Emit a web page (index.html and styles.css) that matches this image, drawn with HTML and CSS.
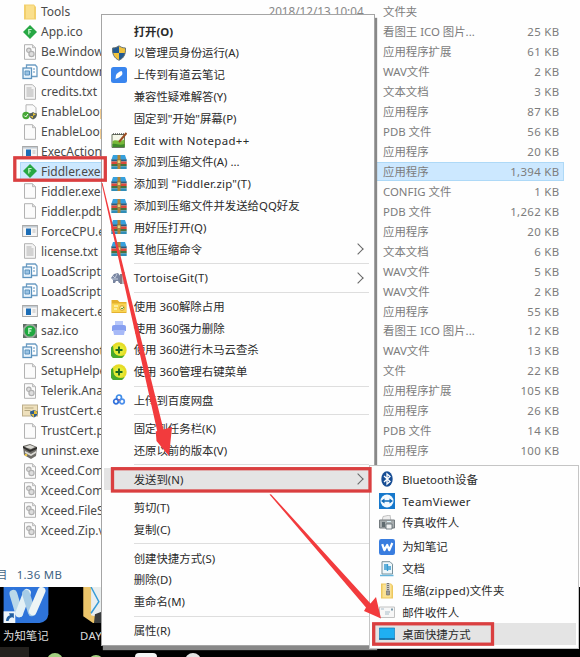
FILE: index.html
```html
<!DOCTYPE html>
<html lang="zh-CN">
<head>
<meta charset="utf-8">
<title>Fiddler</title>
<link rel="stylesheet" href="styles.css">
</head>
<body>
<svg class="defs" width="0" height="0" aria-hidden="true">
  <symbol id="folder" viewBox="0 0 16 16"><path d="M2 .5h10l2 2.500v12.500H2z" fill="#f2cf6c"/><path d="M4 1.500h8v13H4z" fill="#fadf8c"/></symbol>
  <symbol id="fid" viewBox="0 0 16 16"><path d="M8 1l7 7-7 7-7-7z" fill="#27a744"/><path d="M6.800 10.500V5.500h2.800M6.800 8H9" fill="none" stroke="#c5f5ca" stroke-width="1.200"/></symbol>
  <symbol id="page" viewBox="0 0 16 16"><path d="M2.500.7h8l3 3v11.600h-11z" fill="#fbfbfb" stroke="#b2b2b2"/><path d="M10.500.7v3h3" fill="#ddd" stroke="#b2b2b2" stroke-width=".8"/></symbol>
  <symbol id="dll" viewBox="0 0 16 16"><use href="#page"/><circle cx="6.800" cy="6.300" r="2.200" fill="#ddd" stroke="#b0b0b0" stroke-width="1.200"/><circle cx="9.500" cy="10" r="2.600" fill="#ddd" stroke="#b0b0b0" stroke-width="1.200"/></symbol>
  <symbol id="txt" viewBox="0 0 16 16"><path d="M2.500.7h8l3 3v11.600h-11z" fill="#f4f4f4" stroke="#b2b2b2"/><path d="M4.500 4h5M4.500 6h7M4.500 8h7M4.500 10h7M4.500 12h7" stroke="#a8a8a8" stroke-width=".9"/></symbol>
  <symbol id="wav" viewBox="0 0 16 16"><path d="M4.500 1h8.800l1.700 2v9.500H4.500z" fill="#fff" stroke="#6d9dc3" stroke-width="1.300"/><rect x="1" y="4" width="8.500" height="10.500" fill="#e7f3fc" stroke="#5d93be" stroke-width="1.300"/><path d="M3 7h4.500v4H3zM11 5h2M11 8h2" fill="#9bc4e5" stroke="#5d93be"/></symbol>
  <symbol id="exe" viewBox="0 0 16 16"><rect x=".6" y="2.500" width="14.800" height="11" fill="#f6f6f6" stroke="#a8a8a8"/><path d="M1 3h14v1.500H1z" fill="#c2cbd2"/><rect x="4" y="5.500" width="5" height="6.500" fill="#1c6db6"/><path d="M10.500 7h3M10.500 9h3" stroke="#bbb"/></symbol>
  <symbol id="loop" viewBox="0 0 16 16"><path d="M4 .8h7l3 3v6H4z" fill="#fafafa" stroke="#b4b4b4"/><circle cx="4" cy="11.500" r="3.700" fill="#48a838"/><path d="M2.200 11.500l1.500 1.500 2.300-3" fill="none" stroke="#fff"/><path d="M7 9.500c2 0 3-1 4-1.500 1 .5 2 1.500 4 1.500 0 3-1 5-4 6-3-1-4-3-4-6z" fill="#55605a"/><path d="M8 12h3v2.500zM11 9l3 1.300-3 1.700z" fill="#e5c33d"/></symbol>
  <symbol id="saz" viewBox="0 0 16 16"><path d="M1 1h14v14H1z" fill="#9da79f"/><path d="M1 1h4L1 5zM11 1h4v4zM1 11v4h4zM15 11v4h-4z" fill="#5f6d65"/><circle cx="8" cy="8" r="5.500" fill="#1fa83f"/><path d="M6.800 11V5.500h3M6.800 8h2.500" fill="none" stroke="#c7f2cc" stroke-width="1.300"/></symbol>
  <symbol id="cert" viewBox="0 0 16 16"><rect x=".5" y="2" width="15" height="11" fill="#eee0bc" stroke="#bcae8b"/><path d="M2.500 5h9M2.500 7.500h6" stroke="#b5a77f"/><path d="M8 8.500l4-1.500 3.700 1.500c0 3-1 5-3.700 6-3-1-4-3-4-6z" fill="#2d5c8e"/><path d="M12 7.500v3.500h3V8.500zM9 11h3v3.500z" fill="#e4bd38"/></symbol>
  <symbol id="uninst" viewBox="0 0 16 16"><path d="M1 3l7-2 7 3-1 9-5 3-7-4z" fill="#6e6c67"/><path d="M2 4l6-2 5 2-4 2zM3 8l6 3 5-3v2l-5 3-6-3z" fill="#dad9d3"/><path d="M1 3l7 4 7-3v2L8 9 1 5z" fill="#31302e"/><circle cx="4" cy="12" r="1.300" fill="#e8c34a"/></symbol>
  <symbol id="shield" viewBox="0 0 16 16"><path d="M1.500 3C5 3 7 1.500 8 .8 9 1.500 11 3 14.500 3c.3 6-1.500 10-6.500 12.300C3 13 1.200 9 1.500 3z" fill="#f1c33c"/><path d="M8 .8V8H1.800C1.400 6 1.500 4 1.500 3 5 3 7 1.500 8 .8zM8 8h6.200c-.7 3.500-2.700 6-6.200 7.300z" fill="#245a90"/><path d="M1.500 3C5 3 7 1.500 8 .8 9 1.500 11 3 14.500 3c.3 6-1.500 10-6.500 12.300C3 13 1.200 9 1.500 3z" fill="none" stroke="#66747b"/></symbol>
  <symbol id="youdao" viewBox="0 0 16 16"><rect width="16" height="16" rx="2.500" fill="#3985ee"/><path d="M4.500 12l.5-4c1.500-2 3-3.500 5.500-4 1.200 1 1 3 .5 4L8 10.500z" fill="#fff"/></symbol>
  <symbol id="npp" viewBox="0 0 16 16"><path d="M1 2.500h12.500v13H1z" fill="#f5f7e9" stroke="#6a7560"/><path d="M1.500 9.500c3-3 6 1 12-2V15h-12z" fill="#78b839"/><path d="M1.500 12c4-1 6 2 12 0v3h-12z" fill="#3e8a2b"/><path d="M2 2h12" stroke="#555" stroke-width="1.500" stroke-dasharray="1 1"/><path d="M15.500 1L8 10" stroke="#9b4c21" stroke-width="2"/></symbol>
  <symbol id="zip" viewBox="0 0 16 16"><path d="M2 1h12l1.500 4.500H.5z" fill="#36a0dd"/><path d="M.3 5.300h15.400v2.200H.3z" fill="#255d82"/><path d="M.3 7.500h15.400V10H.3z" fill="#dc493a"/><path d="M.3 10h15.400v2.300H.3z" fill="#49723d"/><path d="M.3 12.300h15.400V15H.3z" fill="#2f8db7"/><path d="M6.500 1h3v14h-3z" fill="#b38436"/><rect x="6.200" y="6" width="3.600" height="3.500" fill="#ead17b" stroke="#8e713c" stroke-width=".7"/></symbol>
  <symbol id="tortoise" viewBox="0 0 16 16"><path d="M0 8l3-4 4-1 3 4v6H8l-1-2H5l-1 2H2v-3z" fill="#7885a0"/><path d="M2 6l2 2 2-4M1 9h6" stroke="#c2cbdc" fill="none"/><path d="M9 4h5v10H9z" fill="#817c85"/><path d="M11 2h3v12h-3z" fill="#b9b5bb"/></symbol>
  <symbol id="unlock" viewBox="0 0 16 16"><path d="M.5 2h6l2 2h7v11H.5z" fill="#e5b12e"/><path d="M1 5.500h14V14H1z" fill="#f8d552"/><path d="M3 8h4M3 11h3" stroke="#fff3b5" stroke-width="1.500"/><circle cx="11" cy="10" r="2.300" fill="#fff3b5" stroke="#d39d33"/><path d="M10 10l1 1 2-2" stroke="#5b9c36" fill="none"/></symbol>
  <symbol id="force" viewBox="0 0 16 16"><path d="M4 1h8v6H4z" fill="#b8c8fa"/><path d="M1 7c0-2 2-2 3-2h8c1 0 3 0 3 2v4H1z" fill="#879ff0"/><path d="M2 10h12l-1 5H3z" fill="#a7b9f7"/></symbol>
  <symbol id="safe" viewBox="0 0 16 16"><circle cx="8" cy="8" r="7.700" fill="#e7dc28"/><path d="M2 3.500A7.700 7.700 0 1 0 13.500 13C9 15.500 3 13 2.500 8 2.400 6 2 5 2 3.500z" fill="#48a92d"/><circle cx="8" cy="8" r="5.200" fill="#e4ec36"/><path d="M8 4.500v7M4.500 8h7" stroke="#1c6b21" stroke-width="1.900"/></symbol>
  <symbol id="baidu" viewBox="0 0 16 16"><g fill="none" stroke-width="1.700"><circle cx="8" cy="5.500" r="2.500" stroke="#3c8be7"/><circle cx="5" cy="9.500" r="2.300" stroke="#3171dc"/><circle cx="11" cy="9.500" r="2.300" stroke="#4e90eb"/></g><circle cx="8" cy="8" r=".8" fill="#e2596b"/></symbol>
  <symbol id="bt" viewBox="0 0 16 16"><ellipse cx="8" cy="8" rx="5.700" ry="7.800" fill="#174d94"/><path d="M5 5l6 5.500L8 13V3l3 2.500L5 11" fill="none" stroke="#fff" stroke-width="1.300"/></symbol>
  <symbol id="tv" viewBox="0 0 16 16"><path d="M0 0h16v16H0z" fill="#1678cc"/><circle cx="8" cy="8" r="6.500" fill="#f4faff"/><path d="M2 8l3.500-2.500v1.700h5V5.500L14 8l-3.500 2.500V8.800h-5v1.700z" fill="#126bb8"/></symbol>
  <symbol id="fax" viewBox="0 0 16 16"><path d="M4 1.500L11 0l1 6H3z" fill="#eee" stroke="#aaa" stroke-width=".7"/><path d="M.5 5h15v8H.5z" fill="#a6acae" stroke="#747b7f"/><path d="M3 7h3v5H3z" fill="#606b70"/><path d="M7 9h6v5H7z" fill="#f1f2f2" stroke="#59666c" stroke-width=".8"/><path d="M8 6.500h4" stroke="#d8eef5"/></symbol>
  <symbol id="wiz" viewBox="0 0 16 16"><rect width="16" height="16" rx="2.200" fill="#397ddf"/><path d="M3.200 5.200l2.200 6L8.200 6l2 5.200L13.300 4" fill="none" stroke="#fff" stroke-width="2.200" stroke-linejoin="round"/></symbol>
  <symbol id="docs" viewBox="0 0 16 16"><path d="M3 .7h8l2.500 2.500V13H3z" fill="#eef7fb" stroke="#78909b"/><path d="M5 4h3M5 6h7M5 8h7M8.500 3v7" stroke="#379bd1" stroke-width="1.300"/><path d="M1 14.500h13.500" fill="none" stroke="#65b5dc" stroke-width="1.500"/></symbol>
  <symbol id="zipped" viewBox="0 0 16 16"><path d="M2 .5h10l2 2V15.500H2z" fill="#edc85e"/><path d="M3.500 1.500h9v13h-9z" fill="#fbe294"/><path d="M7 0h4v9H7z" fill="#cccabf"/><path d="M9 0v9" stroke="#777" stroke-width="2" stroke-dasharray="1 1"/><path d="M7.500 8h3v4h-3z" fill="#999" stroke="#666" stroke-width=".6"/></symbol>
  <symbol id="mail" viewBox="0 0 16 16"><path d="M.5 3h15v10.500H.5z" fill="#f7f7f7" stroke="#c2c2c2"/><path d="M2 5h3M6 8h5M6 10h4" stroke="#a8bdc9"/><path d="M12 4.500h2v2h-2z" fill="#7b9aab"/></symbol>
  <symbol id="desk" viewBox="0 0 16 16"><path d="M.3 2h15.400v11.500H.3z" fill="#1faff2" stroke="#167bb6" stroke-width=".7"/><path d="M.3 12.300h15.400v1.200H.3z" fill="#155f92"/></symbol>
</svg>

<main class="screen">
  <section class="explorer">
    <div class="files">
      <div class="file"><svg><use href="#folder"/></svg><span class="name">Tools</span><span class="date">2018/12/13 10:04</span><span class="type">文件夹</span><span class="size"></span></div>
      <div class="file"><svg><use href="#fid"/></svg><span class="name">App.ico</span><span class="date"></span><span class="type">看图王 ICO 图片...</span><span class="size">25 KB</span></div>
      <div class="file"><svg><use href="#dll"/></svg><span class="name">Be.Window</span><span class="date"></span><span class="type">应用程序扩展</span><span class="size">61 KB</span></div>
      <div class="file"><svg><use href="#wav"/></svg><span class="name">Countdown</span><span class="date"></span><span class="type">WAV文件</span><span class="size">2 KB</span></div>
      <div class="file"><svg><use href="#txt"/></svg><span class="name">credits.txt</span><span class="date"></span><span class="type">文本文档</span><span class="size">3 KB</span></div>
      <div class="file"><svg><use href="#loop"/></svg><span class="name">EnableLoop</span><span class="date"></span><span class="type">应用程序</span><span class="size">87 KB</span></div>
      <div class="file"><svg><use href="#page"/></svg><span class="name">EnableLoop</span><span class="date"></span><span class="type">PDB 文件</span><span class="size">56 KB</span></div>
      <div class="file"><svg><use href="#exe"/></svg><span class="name">ExecAction</span><span class="date"></span><span class="type">应用程序</span><span class="size">20 KB</span></div>
      <div class="file selected"><svg><use href="#fid"/></svg><span class="name">Fiddler.exe</span><span class="date"></span><span class="type">应用程序</span><span class="size">1,394 KB</span></div>
      <div class="file"><svg><use href="#page"/></svg><span class="name">Fiddler.exe</span><span class="date"></span><span class="type">CONFIG 文件</span><span class="size">1 KB</span></div>
      <div class="file"><svg><use href="#page"/></svg><span class="name">Fiddler.pdb</span><span class="date"></span><span class="type">PDB 文件</span><span class="size">1,262 KB</span></div>
      <div class="file"><svg><use href="#exe"/></svg><span class="name">ForceCPU.e</span><span class="date"></span><span class="type">应用程序</span><span class="size">20 KB</span></div>
      <div class="file"><svg><use href="#txt"/></svg><span class="name">license.txt</span><span class="date"></span><span class="type">文本文档</span><span class="size">6 KB</span></div>
      <div class="file"><svg><use href="#wav"/></svg><span class="name">LoadScript</span><span class="date"></span><span class="type">WAV文件</span><span class="size">5 KB</span></div>
      <div class="file"><svg><use href="#wav"/></svg><span class="name">LoadScript</span><span class="date"></span><span class="type">WAV文件</span><span class="size">2 KB</span></div>
      <div class="file"><svg><use href="#exe"/></svg><span class="name">makecert.e</span><span class="date"></span><span class="type">应用程序</span><span class="size">55 KB</span></div>
      <div class="file"><svg><use href="#saz"/></svg><span class="name">saz.ico</span><span class="date"></span><span class="type">看图王 ICO 图片...</span><span class="size">12 KB</span></div>
      <div class="file"><svg><use href="#wav"/></svg><span class="name">Screenshot</span><span class="date"></span><span class="type">WAV文件</span><span class="size">13 KB</span></div>
      <div class="file"><svg><use href="#page"/></svg><span class="name">SetupHelpe</span><span class="date"></span><span class="type">文件</span><span class="size">22 KB</span></div>
      <div class="file"><svg><use href="#dll"/></svg><span class="name">Telerik.Ana</span><span class="date"></span><span class="type">应用程序扩展</span><span class="size">105 KB</span></div>
      <div class="file"><svg><use href="#cert"/></svg><span class="name">TrustCert.e</span><span class="date"></span><span class="type">应用程序</span><span class="size">26 KB</span></div>
      <div class="file"><svg><use href="#page"/></svg><span class="name">TrustCert.p</span><span class="date"></span><span class="type">PDB 文件</span><span class="size">14 KB</span></div>
      <div class="file"><svg><use href="#uninst"/></svg><span class="name">uninst.exe</span><span class="date"></span><span class="type">应用程序</span><span class="size">100 KB</span></div>
      <div class="file"><svg><use href="#dll"/></svg><span class="name">Xceed.Com</span></div>
      <div class="file"><svg><use href="#dll"/></svg><span class="name">Xceed.Com</span></div>
      <div class="file"><svg><use href="#dll"/></svg><span class="name">Xceed.FileS</span></div>
      <div class="file"><svg><use href="#dll"/></svg><span class="name">Xceed.Zip.v</span></div>
    </div>
    <div class="status"><span class="unit">目</span><span>1.36 MB</span></div>
  </section>

  <section class="desktop">
    <div class="shortcut">
      <svg class="wizicon" viewBox="0 0 46 37"><path d="M0 0h46v28q-1 8-9 9H0z" fill="#2e74da"/><g fill="none" stroke-linecap="round" stroke-width="8"><path d="M10 7l6 20" stroke="#b9d8e9"/><path d="M24 6l-8 21" stroke="#e4f1f5"/><path d="M23 7l6 19" stroke="#a6cce6"/><path d="M39 4l-9 21" stroke="#eef5f5"/></g><path d="M0 25h12v12H0z" fill="#eef5fa"/><path d="M2.500 35q0-5 4-6l-1-2h5v5l-1.500-1q-3 0-4 4z" fill="#2360a2"/></svg>
      <span>为知笔记</span>
    </div>
    <div class="shortcut day">
      <svg class="dayicon" viewBox="0 0 20 37"><path d="M0 0h20v37H10L0 30z" fill="#ecc56b"/><path d="M8 0h12v32l-12-3z" fill="#e9eeee"/><path d="M8 0l8 15-8 12" fill="none" stroke="#359bd7" stroke-width="1.500"/><path d="M12 28l8-3v12h-9z" fill="#393c3d"/></svg>
      <span>DAY</span>
    </div>
    <div class="taskbar"><i class="tile"></i><i class="dot green"></i><i class="dot green small"></i><i class="app"></i><i class="dot pale"></i></div>
  </section>

  <nav class="menu main-menu">
    <div class="item bold"><i></i>打开(O)</div>
    <div class="item"><svg><use href="#shield"/></svg>以管理员身份运行(A)</div>
    <div class="item"><svg><use href="#youdao"/></svg>上传到有道云笔记</div>
    <div class="item"><i></i>兼容性疑难解答(Y)</div>
    <div class="item"><i></i>固定到"开始"屏幕(P)</div>
    <div class="item wide"><svg><use href="#npp"/></svg>Edit with Notepad++</div>
    <div class="item"><svg><use href="#zip"/></svg>添加到压缩文件(A) ...</div>
    <div class="item quoted"><svg><use href="#zip"/></svg>添加到 "Fiddler.zip"(T)</div>
    <div class="item"><svg><use href="#zip"/></svg>添加到压缩文件并发送给QQ好友</div>
    <div class="item"><svg><use href="#zip"/></svg>用好压打开(Q)</div>
    <div class="item"><svg><use href="#zip"/></svg>其他压缩命令<b class="more"></b></div>
    <hr>
    <div class="item quoted"><svg><use href="#tortoise"/></svg>TortoiseGit(T)<b class="more"></b></div>
    <hr>
    <div class="item"><svg><use href="#unlock"/></svg>使用 360解除占用</div>
    <div class="item"><svg><use href="#force"/></svg>使用 360强力删除</div>
    <div class="item"><svg><use href="#safe"/></svg>使用 360进行木马云查杀</div>
    <div class="item"><svg><use href="#safe"/></svg>使用 360管理右键菜单</div>
    <hr>
    <div class="item"><svg><use href="#baidu"/></svg>上传到百度网盘</div>
    <hr>
    <div class="item"><i></i>固定到任务栏(K)</div>
    <div class="item"><i></i>还原以前的版本(V)</div>
    <hr>
    <div class="item active"><i></i>发送到(N)<b class="more"></b></div>
    <hr class="blank">
    <div class="item"><i></i>剪切(T)</div>
    <div class="item"><i></i>复制(C)</div>
    <hr>
    <div class="item"><i></i>创建快捷方式(S)</div>
    <div class="item"><i></i>删除(D)</div>
    <div class="item"><i></i>重命名(M)</div>
    <hr>
    <div class="item"><i></i>属性(R)</div>
  </nav>

  <nav class="menu sub-menu">
    <div class="item"><svg><use href="#bt"/></svg>Bluetooth设备</div>
    <div class="item wide"><svg><use href="#tv"/></svg>TeamViewer</div>
    <div class="item"><svg><use href="#fax"/></svg>传真收件人</div>
    <div class="item tall"><svg><use href="#wiz"/></svg>为知笔记</div>
    <div class="item"><svg><use href="#docs"/></svg>文档</div>
    <div class="item quoted"><svg><use href="#zipped"/></svg>压缩(zipped)文件夹</div>
    <div class="item"><svg><use href="#mail"/></svg>邮件收件人</div>
    <div class="item active"><svg><use href="#desk"/></svg>桌面快捷方式</div>
  </nav>

  <svg class="marks" viewBox="0 0 580 657">
    <g fill="none" stroke="#da3f40" stroke-width="3.300">
      <rect x="14.800" y="157.800" width="90.500" height="22.400"/>
      <rect x="112.500" y="468.700" width="257.500" height="22.300"/>
      <rect x="373.700" y="623.800" width="118.800" height="20.400"/>
    </g>
    <path d="M101.500 183l1 0L163.500 429.500l8.500-2.500L169 456l-12.500-15-.8-9.500 1.500-.5z" fill="#f23b3d"/>
    <path d="M269.500 494.500l1.500-.3L370.500 603.500l5.500-6.500 5 21.500-17-7.500 2-3.500z" fill="#f23b3d"/>
  </svg>
</main>
</body>
</html>
```

FILE: styles.css
```css
* { box-sizing: border-box; }
body { margin: 0; background: #fff; }
.defs { position: absolute; }

.screen {
  position: relative;
  display: flex;
  flex-direction: column;
  width: 580px;
  height: 657px;
  overflow: hidden;
  background: #000;
  font-family: "Noto Sans", "Noto Sans CJK SC", sans-serif;
  font-size: 11.4px;
  color: #2b2b2b;
}

/* File manager window */
.explorer {
  height: 587px;
  flex: none;
  padding-top: 2px;
  background: #fefefe;
}
.file {
  display: grid;
  grid-template-columns: 16px 228px 114px 100px 80px;
  align-items: center;
  width: 544px;
  height: 19.95px;
  margin-left: 20px;
  padding-left: 1.500px;
  line-height: 19px;
  white-space: nowrap;
}
.file svg { width: 16px; height: 16px; }
.name { padding-left: 3.500px; font-size: 12px; color: #4a4a4a; }
.date { padding-left: 3px; font-size: 11.700px; color: #888; }
.type { padding-left: 3.500px; color: #7c7c7c; }
.size { text-align: right; letter-spacing: .35px; color: #7c7c7c; }
.selected { background: #cce8ff; box-shadow: inset 0 0 0 1px #aed9f7; }
.status {
  display: flex;
  gap: 9px;
  margin-top: 24.500px;
  margin-left: -4px;
  line-height: 20px;
  letter-spacing: .3px;
  color: #3e6484;
}

/* Desktop below the window */
.desktop {
  display: grid;
  grid-template-columns: 83px 1fr;
  grid-template-rows: 60px 10px;
  color: #ddd;
}
.shortcut { display: flex; flex-direction: column; padding-left: 3px; line-height: 22px; }
.wizicon { width: 46px; height: 37px; margin-bottom: 2px; }
.dayicon { width: 20px; height: 37px; margin-bottom: 2px; }
.day { padding-left: 0; }
.day span { margin-left: -3px; letter-spacing: .3px; }
.taskbar { grid-column: 1 / 3; display: flex; height: 10px; overflow: hidden; }
.taskbar i { flex: none; }
.tile { width: 29px; height: 10px; background: #24211e; }
.dot { width: 16px; height: 16px; margin: 6px 0 0 18px; border-radius: 50%; background: #e4e4e4; }
.green { background: #a2cf80; }
.small { margin-left: 25px; margin-top: 8px; }
.app { width: 22px; height: 10px; margin: 6px 0 0 31px; border-radius: 4px 4px 0 0; background: #f5f5f5; }
.pale { margin-left: 28px; }

/* Context menus */
.menu {
  position: absolute;
  border: 1px solid #a5a5a5;
  background: #fefefe;
}
.main-menu {
  left: 101px;
  top: 14px;
  width: 274px;
  height: 632px;
  padding: 5.300px 2px;
  box-shadow: 2px 4px 1px #888;
}
.item {
  display: flex;
  align-items: center;
  height: 21.8px;
  padding: 0 6px 0 6.500px;
  line-height: 21px;
  white-space: pre;
}
.item svg, .item i { flex: none; width: 16px; height: 16px; margin-right: 7.200px; }
.bold { font-weight: 700; }
.wide { letter-spacing: .37px; }
.quoted { letter-spacing: .22px; }
.active { background: #e4e4e4; }
.more {
  width: 8px;
  height: 8px;
  margin-left: auto;
  margin-right: 4px;
  border: solid #666;
  border-width: 1px 1px 0 0;
  transform: rotate(45deg);
}
.menu hr {
  height: 1px;
  margin: 2.900px 3px 2.900px 30px;
  border: 0;
  background: #dedede;
}
.menu .blank { background: none; }
.sub-menu {
  left: 369px;
  top: 465px;
  width: 210px;
  height: 184px;
  padding: 2.500px 2px;
  border-color: #c5c5c5;
}
.sub-menu .item { padding-left: 7px; }
.sub-menu .tall { height: 24px; padding-top: 2px; }

/* Highlight boxes and arrows */
.marks { position: absolute; inset: 0; width: 580px; height: 657px; }
```
